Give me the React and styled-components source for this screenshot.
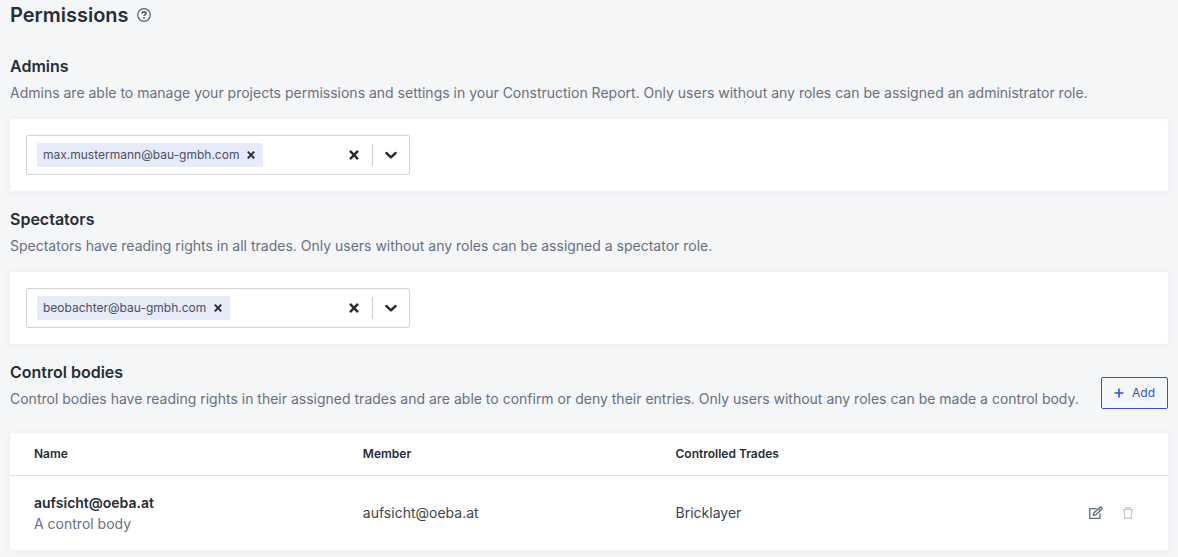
import React, { useState } from "react";
import styled, { createGlobalStyle } from "styled-components";

const GlobalStyle = createGlobalStyle`
  *, *::before, *::after { box-sizing: border-box; }
  body {
    margin: 0;
    background: #f4f6f8;
    color: #262d37;
    font-family: Inter, "Liberation Sans", sans-serif;
    font-size: 14px;
    line-height: 20px;
  }
  h1, h2, p { margin: 0; }
  button, input { font: inherit; color: inherit; }
`;

const Page = styled.main`
  padding: 0 10px 8px;
`;

const TitleRow = styled.header`
  display: flex;
  align-items: center;
  gap: 8px;
  height: 30px;
  margin-bottom: 24px;
`;

const Title = styled.h1`
  font-size: 20px;
  line-height: 30px;
  font-weight: 600;
`;

const IconButton = styled.button`
  display: inline-flex;
  align-items: center;
  justify-content: center;
  flex: none;
  width: ${(p) => p.$size}px;
  height: ${(p) => p.$size}px;
  padding: 0;
  border: 0;
  background: none;
  color: ${(p) => p.$color || "#262d37"};
  cursor: pointer;

  &:disabled { cursor: default; }
`;

const Section = styled.section`
  margin-bottom: 16px;
`;

const SectionHead = styled.div`
  display: flex;
  align-items: flex-end;
  justify-content: space-between;
  gap: 16px;
  margin-bottom: ${(p) => p.$gap}px;
`;

const SectionTitle = styled.h2`
  margin-bottom: 5px;
  font-size: 16px;
  line-height: 24px;
  font-weight: 600;
`;

const Description = styled.p`
  color: #696f80;
`;

const Card = styled.div`
  padding: ${(p) => p.$pad}px;
  border-radius: 2px;
  background: #fff;
  box-shadow: 0 1px 8px rgba(38, 45, 55, 0.05);
`;

const SelectBox = styled.div`
  display: flex;
  align-items: center;
  width: 384px;
  max-width: 100%;
  height: 40px;
  padding-left: 10px;
  border: 1px solid #d2d4d9;
  border-radius: 2px;
`;

const Tag = styled.span`
  display: flex;
  align-items: center;
  height: 24px;
  padding-left: 6px;
  border-radius: 2px;
  background: #e7eaf9;
  color: #4b5060;
  font-size: 12px;
  white-space: nowrap;
`;

const SelectInput = styled.input`
  flex: 1;
  min-width: 0;
  height: 24px;
  border: 0;
  outline: 0;
  background: none;
`;

const Divider = styled.span`
  width: 1px;
  height: 22px;
  background: #cccccc;
`;

const AddButton = styled.button`
  display: inline-flex;
  align-items: center;
  justify-content: center;
  gap: 8px;
  flex: none;
  height: 32px;
  padding: 0 12px;
  border: 1px solid #2f54c8;
  border-radius: 2px;
  background: none;
  color: #2f54c8;
  font-size: 12px;
  cursor: pointer;
`;

const Table = styled.table`
  width: 100%;
  border-collapse: separate;
  border-spacing: 0;
  table-layout: fixed;
`;

const HeadCell = styled.th`
  width: ${(p) => p.$width};
  height: 43px;
  padding: 0 24px;
  border-bottom: 1px solid #e1e3e7;
  font-size: 12px;
  font-weight: 600;
  text-align: left;
`;

const Cell = styled.td`
  height: 74px;
  padding: 0 24px;
  color: #3e4451;
`;

const BodyName = styled.div`
  color: #262d37;
  font-weight: 600;
  line-height: 21px;
`;

const BodyNote = styled.div`
  color: #696f80;
  line-height: 21px;
`;

const Actions = styled.div`
  display: flex;
  justify-content: flex-end;
  gap: 16px;
  padding-right: 8px;
`;

const HelpIcon = () => (
  <svg width="14" height="14" viewBox="0 0 14 14" fill="none" stroke="currentColor" aria-hidden="true">
    <circle cx="7" cy="7" r="6.3" strokeWidth="1.2" />
    <path d="M5 5.7c0-1.2.8-1.8 2-1.8s2 .7 2 1.6c0 1.3-2 1.2-2 2.6" strokeWidth="1.6" />
    <path d="M7 9v1.6" strokeWidth="1.7" />
  </svg>
);

const CrossIcon = ({ size, weight }) => (
  <svg width={size} height={size} viewBox="0 0 10 10" fill="none" stroke="currentColor" strokeWidth={weight} aria-hidden="true">
    <path d="M1 .8 9 9.2M9 .8 1 9.2" />
  </svg>
);

const ChevronIcon = () => (
  <svg width="12" height="8" viewBox="0 0 12 8" fill="none" stroke="currentColor" strokeWidth="2.4" strokeLinecap="round" strokeLinejoin="round" aria-hidden="true">
    <path d="M1.4 2 6 6.3 10.6 2" />
  </svg>
);

const PlusIcon = () => (
  <svg width="10" height="10" viewBox="0 0 10 10" stroke="currentColor" strokeWidth="1.6" aria-hidden="true">
    <path d="M5 .5v9M.5 5h9" />
  </svg>
);

const EditIcon = () => (
  <svg width="14" height="14" viewBox="0 0 14 14" fill="none" stroke="currentColor" strokeWidth="1.3" strokeLinejoin="round" aria-hidden="true">
    <path d="M7.6 2.6H.7v9.8h10.2V7.6" />
    <path d="m4.8 7 6-5.6q.9-.8 1.8.1t.1 1.8l-6 5.6-2.4.5zM9.4 2.6l2 2" />
  </svg>
);

const TrashIcon = () => (
  <svg width="12" height="12" viewBox="0 0 12 12" fill="none" stroke="currentColor" strokeWidth="1.2" aria-hidden="true">
    <path d="M1 2.5h10M4 2.5V.7h4v1.8M2.3 2.5l.4 8.8h6.6l.4-8.8" />
  </svg>
);

function MemberSelect({ label, email }) {
  const [members, setMembers] = useState([email]);
  return (
    <SelectBox>
      {members.map((member) => (
        <Tag key={member}>
          {member}
          <IconButton type="button" $size={24} aria-label={`Remove ${member}`} onClick={() => setMembers([])}>
            <CrossIcon size={8} weight={2.4} />
          </IconButton>
        </Tag>
      ))}
      <SelectInput type="text" role="combobox" aria-expanded="false" aria-label={label} />
      <IconButton type="button" $size={36} aria-label={`Clear ${label}`} onClick={() => setMembers([])}>
        <CrossIcon size={10} weight={2.4} />
      </IconButton>
      <Divider />
      <IconButton type="button" $size={36} aria-label={`Open ${label}`}>
        <ChevronIcon />
      </IconButton>
    </SelectBox>
  );
}

function Heading({ title, children, action, gap = 16 }) {
  return (
    <SectionHead $gap={gap}>
      <div>
        <SectionTitle>{title}</SectionTitle>
        <Description>{children}</Description>
      </div>
      {action}
    </SectionHead>
  );
}

export default function App() {
  return (
    <>
      <GlobalStyle />
      <Page>
        <TitleRow>
          <Title>Permissions</Title>
          <IconButton type="button" $size={14} $color="#565d6e" aria-label="Help">
            <HelpIcon />
          </IconButton>
        </TitleRow>

        <Section>
          <Heading title="Admins">
            Admins are able to manage your projects permissions and settings in your Construction Report. Only users without any roles can be assigned an administrator role.
          </Heading>
          <Card $pad={16}>
            <MemberSelect label="Admins" email="max.mustermann@bau-gmbh.com" />
          </Card>
        </Section>

        <Section>
          <Heading title="Spectators">
            Spectators have reading rights in all trades. Only users without any roles can be assigned a spectator role.
          </Heading>
          <Card $pad={16}>
            <MemberSelect label="Spectators" email="beobachter@bau-gmbh.com" />
          </Card>
        </Section>

        <section>
          <Heading
            title="Control bodies"
            gap={24}
            action={
              <AddButton type="button">
                <PlusIcon />
                Add
              </AddButton>
            }
          >
            Control bodies have reading rights in their assigned trades and are able to confirm or deny their entries. Only users without any roles can be made a control body.
          </Heading>
          <Card $pad={0}>
            <Table>
              <thead>
                <tr>
                  <HeadCell scope="col" $width="28.4%">Name</HeadCell>
                  <HeadCell scope="col" $width="27%">Member</HeadCell>
                  <HeadCell scope="col" $width="27%">Controlled Trades</HeadCell>
                  <HeadCell as="td" />
                </tr>
              </thead>
              <tbody>
                <tr>
                  <Cell>
                    <BodyName>aufsicht@oeba.at</BodyName>
                    <BodyNote>A control body</BodyNote>
                  </Cell>
                  <Cell>aufsicht@oeba.at</Cell>
                  <Cell>Bricklayer</Cell>
                  <Cell>
                    <Actions>
                      <IconButton type="button" $size={16} $color="#5d6880" aria-label="Edit">
                        <EditIcon />
                      </IconButton>
                      <IconButton type="button" $size={16} $color="#c3c6cd" aria-label="Delete" disabled>
                        <TrashIcon />
                      </IconButton>
                    </Actions>
                  </Cell>
                </tr>
              </tbody>
            </Table>
          </Card>
        </section>
      </Page>
    </>
  );
}
